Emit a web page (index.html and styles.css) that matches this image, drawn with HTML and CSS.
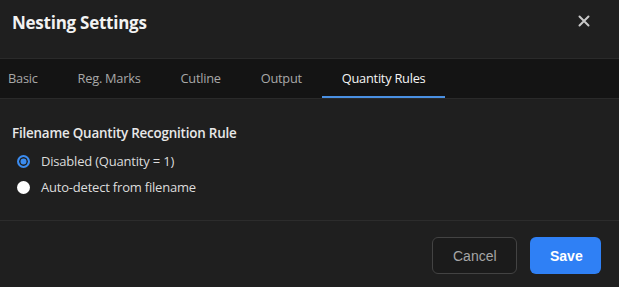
FILE: index.html
```html
<!DOCTYPE html>
<html>
<head>
<meta charset="utf-8">
<link rel="stylesheet" href="styles.css">
</head>
<body>
<div class="dialog">
  <div class="header">
    <h1 class="title">Nesting Settings</h1>
    <button class="close" aria-label="Close">
      <svg width="12" height="12" viewBox="0 0 12 12"><path d="M1.5 1.5 L10.5 10.5 M10.5 1.5 L1.5 10.5" stroke="#c8c8c8" stroke-width="2" stroke-linecap="round"/></svg>
    </button>
  </div>
  <div class="tabbar">
    <div class="tabs">
      <div class="tab">Basic</div>
      <div class="tab">Reg. Marks</div>
      <div class="tab">Cutline</div>
      <div class="tab">Output</div>
      <div class="tab active">Quantity Rules</div>
    </div>
  </div>
  <div class="content">
    <div class="section-title">Filename Quantity Recognition Rule</div>
    <label class="option"><span class="radio checked"></span><span class="label">Disabled (Quantity = 1)</span></label>
    <label class="option"><span class="radio"></span><span class="label">Auto-detect from filename</span></label>
  </div>
  <div class="footer">
    <button class="btn cancel">Cancel</button>
    <button class="btn save">Save</button>
  </div>
</div>
</body>
</html>
```

FILE: styles.css
```css
* { box-sizing: border-box; }
html, body {
  margin: 0;
  padding: 0;
  background: #1f1f1f;
  overflow: hidden;
}
body {
  font-family: "Open Sans", "Noto Sans", sans-serif;
  color: #e6e6e6;
}
.dialog {
  width: 619px;
  height: 287px;
  background: #1f1f1f;
  display: flex;
  flex-direction: column;
}
.header {
  height: 58px;
  display: flex;
  justify-content: space-between;
  align-items: flex-start;
  padding: 9px 29px 0 12px;
}
.title {
  margin: 0;
  font-size: 17px;
  font-weight: 700;
  color: #f2f2f2;
  line-height: 28px;
  letter-spacing: -0.25px;
}
.close {
  background: none;
  border: none;
  padding: 0;
  margin-top: 6px;
  width: 12px;
  height: 12px;
  display: flex;
}
.tabbar {
  height: 41px;
  background: #141414;
  border-top: 1px solid #2a2a2a;
  border-bottom: 1px solid #2a2a2a;
  overflow: hidden;
}
.tabs {
  display: flex;
  margin-left: -12px;
  height: 100%;
}
.tab {
  padding: 0 20px;
  font-size: 12.8px;
  color: #a8a8a8;
  line-height: 39px;
  border-bottom: 2px solid transparent;
  height: 39px;
  letter-spacing: -0.25px;
}
.tab.active {
  color: #f4f4f4;
  border-bottom-color: #4a90e2;
}
.content {
  flex: 0 0 122px;
  padding: 25px 12px 0;
  border-bottom: 1px solid #2c2c2c;
}
.section-title {
  font-size: 13.4px;
  font-weight: 600;
  color: #e8e8e8;
  line-height: 18px;
  margin-bottom: 6px;
  letter-spacing: -0.2px;
}
.option {
  display: flex;
  align-items: center;
  height: 26px;
  padding-left: 5px;
}
.radio {
  width: 13px;
  height: 13px;
  border-radius: 50%;
  background: #ffffff;
  flex: none;
  margin-right: 11px;
}
.radio.checked {
  border: 2px solid #3b8cf0;
  box-shadow: inset 0 0 0 1.5px #1f1f1f;
  background: #3b8cf0;
}
.label {
  font-size: 13px;
  color: #dcdcdc;
  letter-spacing: -0.2px;
}
.footer {
  display: flex;
  justify-content: flex-end;
  gap: 13px;
  padding: 16px 18px 0;
}
.btn {
  height: 37px;
  padding: 0 20px;
  border-radius: 6px;
  font-family: "Liberation Sans", Arial, sans-serif;
  font-size: 14px;
}
.cancel {
  background: #1b1b1b;
  border: 1px solid #434343;
  color: #a6a6a6;
  width: 85px;
}
.save {
  background: #2f80f5;
  border: none;
  color: #ffffff;
  font-weight: 700;
  width: 71px;
}
```
